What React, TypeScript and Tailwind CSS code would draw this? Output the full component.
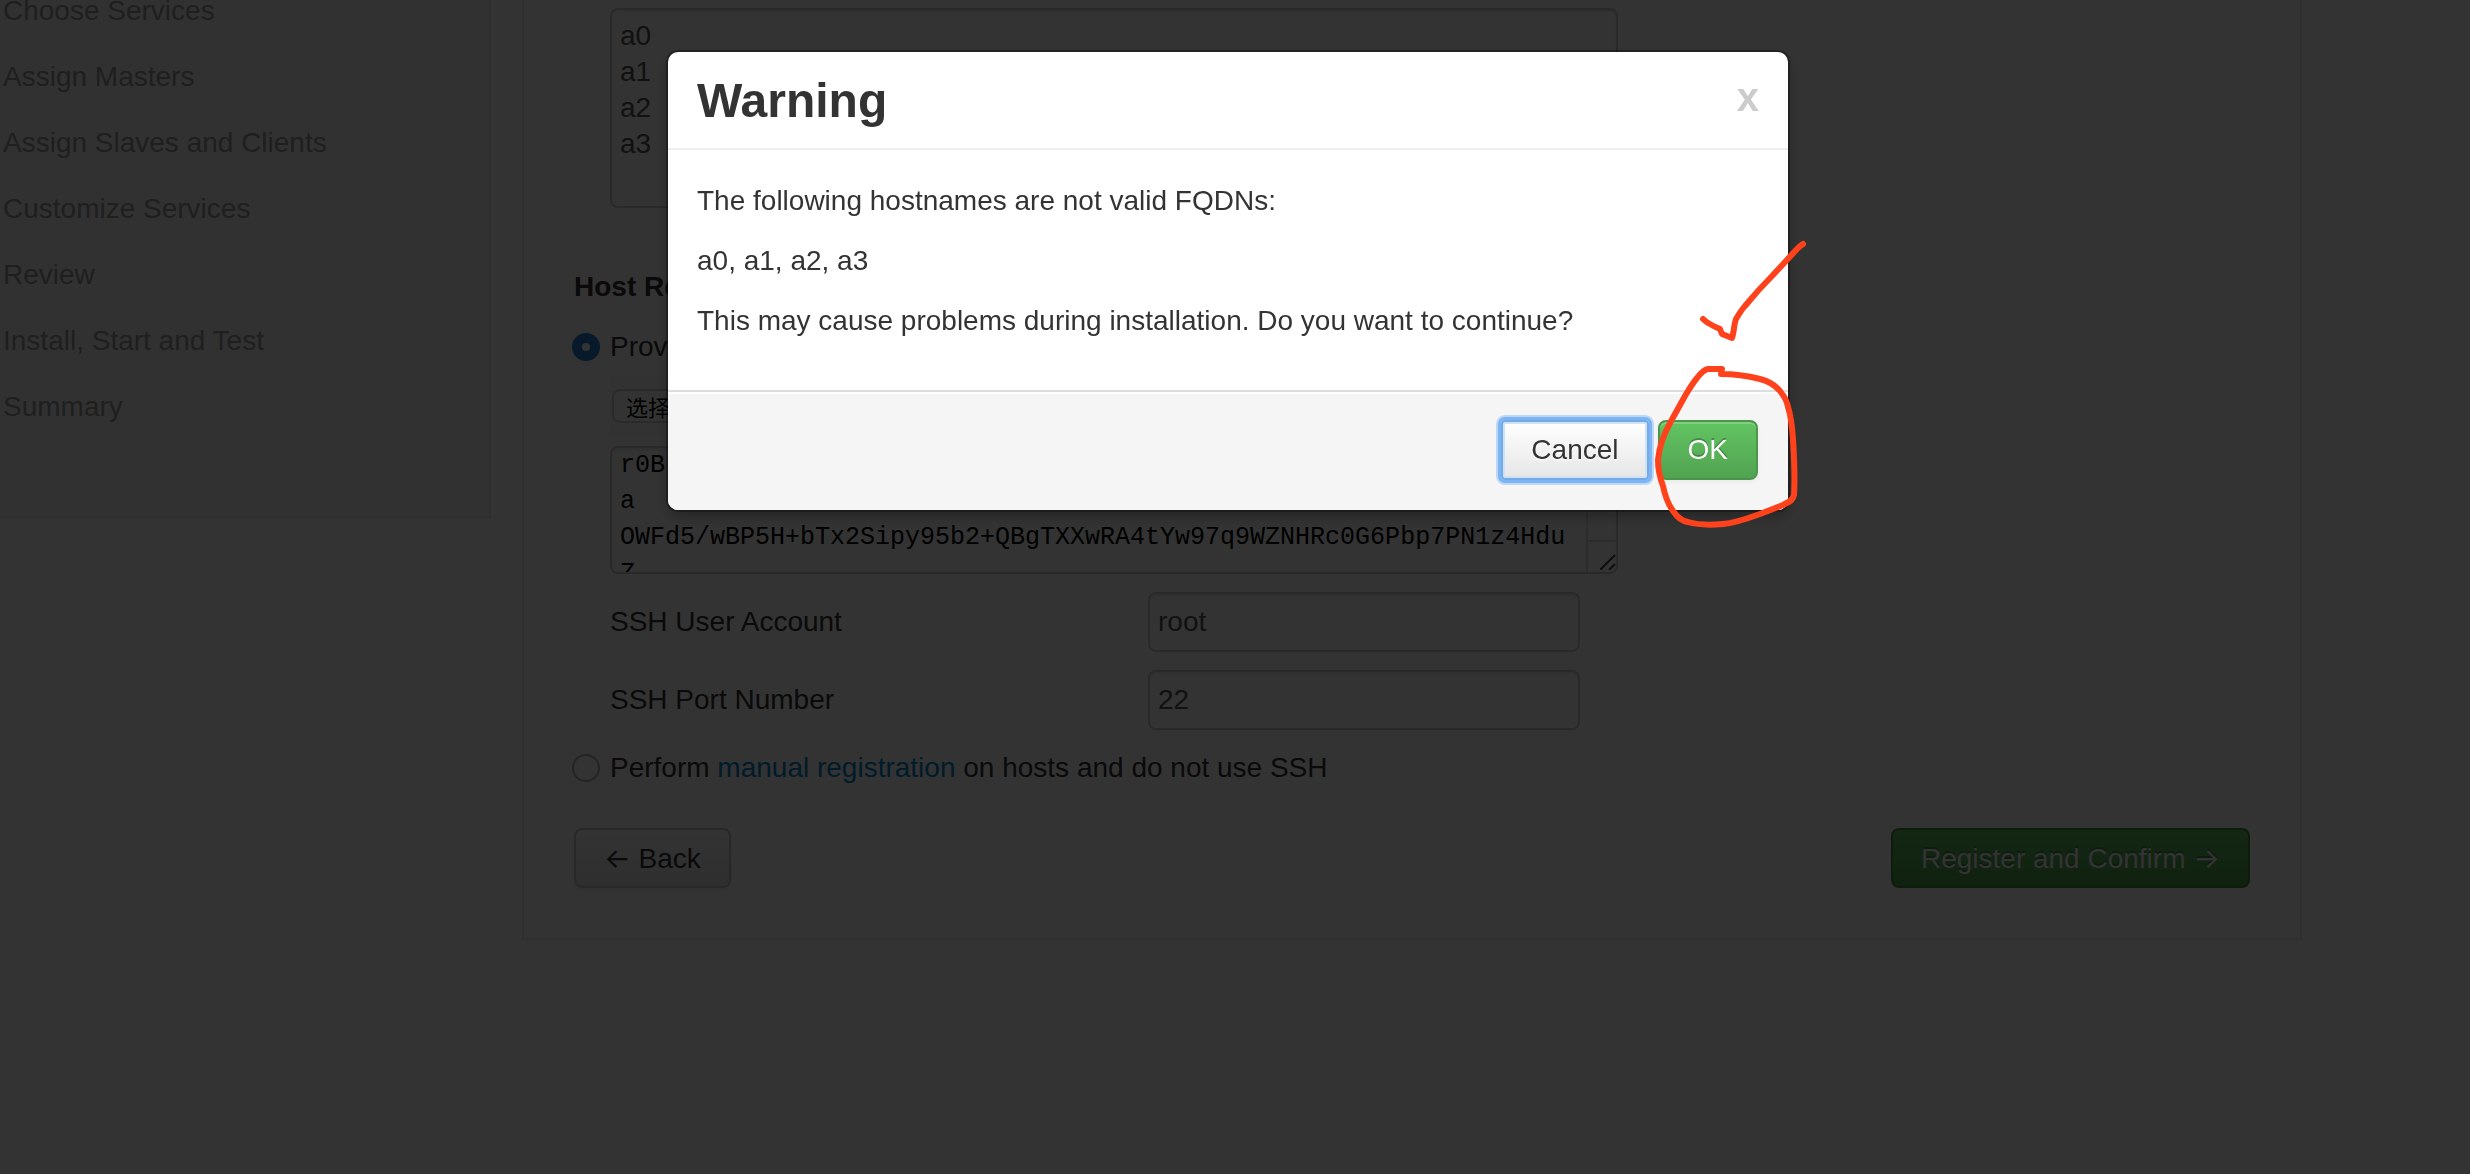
import type { ReactNode } from "react";

const steps = [
  "Choose Services",
  "Assign Masters",
  "Assign Slaves and Clients",
  "Customize Services",
  "Review",
  "Install, Start and Test",
  "Summary",
];

const hosts = ["a0", "a1", "a2", "a3"];

const sshKey = [
  "r0B",
  "a",
  "OWFd5/wBP5H+bTx2Sipy95b2+QBgTXXwRA4tYw97q9WZNHRc0G6Pbp7PN1z4Hdu",
  "Z",
].join("\n");

const fieldBox =
  "rounded-lg border-2 border-[#cccccc] bg-white px-2 text-[#555555] shadow-[inset_0_2px_2px_rgba(0,0,0,0.075)] outline-none";

function Sidebar() {
  return (
    <aside className="w-[491px] shrink-0 border-r-2 border-b-2 border-[#e3e3e3] bg-[#f5f5f5] pt-px pb-[99px] pl-[3px]">
      <ol className="flex flex-col gap-[46px] leading-5 text-[#999999]">
        {steps.map((s) => (
          <li key={s}>{s}</li>
        ))}
      </ol>
    </aside>
  );
}

function RadioRow({ id, checked, children }: { id: string; checked?: boolean; children: ReactNode }) {
  return (
    <div className="-ml-0.5 flex items-center gap-2.5">
      <input
        id={id}
        type="radio"
        name="registration"
        defaultChecked={checked}
        className="size-7 appearance-none rounded-full border-2 border-[#b5b5b5] bg-white checked:border-[10px] checked:border-[#2a7fdc]"
      />
      <label htmlFor={id}>{children}</label>
    </div>
  );
}

function Field({ id, label, value }: { id: string; label: string; value: string }) {
  return (
    <div className="mt-[18px] ml-9 flex items-center">
      <label htmlFor={id} className="w-[538px]">
        {label}
      </label>
      <input id={id} type="text" defaultValue={value} className={"h-[60px] w-[432px] " + fieldBox} />
    </div>
  );
}

function InstallOptions() {
  return (
    <main className="mr-[168px] flex-1 border-x-2 border-b-2 border-[#e8e8e8] px-[50px] pt-2 pb-[50px] leading-10 text-[#333333]">
      <textarea
        aria-label="Target hosts"
        defaultValue={hosts.join("\n")}
        className={"ml-9 block h-[200px] w-[1008px] resize-none overflow-hidden py-2 leading-9 " + fieldBox}
      />
      <h2 className="mt-[59px] mb-5 font-bold">Host Registration Information</h2>
      <RadioRow id="use-ssh" checked>
        Provide your SSH Private Key to automatically register hosts
      </RadioRow>

      <div className="mt-[9px] ml-9 flex h-[60px] w-[1008px] items-center bg-[#fafafa] pl-0.5 text-[22px] text-black">
        <label className="rounded-lg border-2 border-[#d0d0d0] bg-white px-3 font-['Noto_Sans_CJK_SC',sans-serif] leading-[30px]">
          选择文件
          <input type="file" className="sr-only" />
        </label>
      </div>

      <div className="relative mt-2.5 ml-9 w-[1008px]">
        <textarea
          aria-label="SSH private key"
          defaultValue={sshKey}
          className={
            "block h-32 w-full resize-none overflow-hidden whitespace-pre font-['Liberation_Mono',monospace] text-[25px] leading-9 " +
            fieldBox +
            " text-black"
          }
        />
        <div className="absolute inset-y-0.5 right-0.5 flex w-[30px] flex-col justify-end border-l-2 border-[#dddddd]">
          <div className="flex h-8 items-end justify-end border-t-2 border-[#dddddd]">
            <svg viewBox="0 0 16 16" className="mb-0.5 size-4" stroke="#444444" strokeWidth="2" fill="none">
              <path d="M0 16 15 1M9 16 15 10" />
            </svg>
          </div>
        </div>
      </div>

      <Field id="ssh-user" label="SSH User Account" value="root" />
      <Field id="ssh-port" label="SSH Port Number" value="22" />

      <div className="mt-[18px]">
        <RadioRow id="manual">
          Perform{" "}
          <a href="#manual" className="text-[#0088cc]">
            manual registration
          </a>{" "}
          on hosts and do not use SSH
        </RadioRow>
      </div>

      <div className="mt-10 flex justify-between">
        <button className="h-[60px] rounded-lg border-2 border-[#c5c5c5] bg-linear-to-b from-white to-[#e6e6e6] px-7 shadow-[0_2px_4px_rgba(0,0,0,0.05)]">
          <span className="font-['Inter',sans-serif]">←</span> Back
        </button>
        <button className="h-[60px] rounded-lg border-2 border-[#458a45] bg-linear-to-b from-[#62c462] to-[#51a351] px-7 text-white text-shadow-[0_-2px_0_rgba(0,0,0,0.25)]">
          Register and Confirm <span className="font-['Inter',sans-serif]">→</span>
        </button>
      </div>
    </main>
  );
}

function Markup() {
  return (
    <svg
      viewBox="1648 228 170 312"
      aria-hidden="true"
      className="pointer-events-none absolute top-[176px] -right-[30px] h-[312px] w-[170px]"
      fill="none"
      stroke="#ff421c"
      strokeWidth="6"
      strokeLinecap="round"
      strokeLinejoin="round"
    >
      <path d="M1703 319C1706 322 1713 326 1720 329L1722 334 1732 338C1734 332 1734 324 1736 319C1739 314 1742 309 1745 306C1754 295 1764 284 1773 275L1797 249Q1800 246 1803 244" />
      <path d="M1722 369H1708C1703 370 1700 374 1697 378C1692 384 1688 391 1685 396L1670 423C1664 434 1659 448 1658 460C1658 470 1660 478 1663 486C1665 496 1668 504 1673 511C1677 517 1682 521 1688 522C1698 525 1712 525 1723 524C1736 523 1749 518 1760 514L1783 505C1788 502 1793 501 1794 495C1795 480 1794 455 1793 439C1792 425 1791 416 1788 407C1787 400 1784 396 1780 391C1775 385 1768 381 1760 379C1748 376 1734 374 1721 374Z" />
    </svg>
  );
}

function WarningDialog() {
  return (
    <div
      role="dialog"
      aria-modal="true"
      aria-labelledby="warning-title"
      className="relative w-full max-w-[1120px] rounded-[10px] bg-white leading-10 text-[#333333] shadow-[0_0_0_2px_rgba(0,0,0,0.3),0_6px_14px_rgba(0,0,0,0.3)]"
    >
      <header className="flex items-start justify-between border-b-2 border-[#eeeeee] px-[29px] pt-[19px] pb-[17px]">
        <h1 id="warning-title" className="text-5xl leading-[60px] font-bold">
          Warning
        </h1>
        <button aria-label="Close" className="text-[40px] leading-[52px] font-bold text-[#cccccc]">
          x
        </button>
      </header>
      <div className="flex flex-col gap-5 px-[29px] pt-[31px] pb-[49px]">
        <p>The following hostnames are not valid FQDNs:</p>
        <p>{hosts.join(", ")}</p>
        <p>This may cause problems during installation. Do you want to continue?</p>
      </div>
      <footer className="flex justify-end gap-[9px] rounded-b-[10px] border-t-2 border-[#dddddd] bg-[#f5f5f5] px-[30px] pt-7 pb-[30px] shadow-[inset_0_2px_0_#ffffff]">
        <button className="h-[60px] rounded-sm border-2 border-[#74aae8] bg-linear-to-b from-white to-[#e6e6e6] px-7 shadow-[0_0_0_3px_#7db4f3,0_0_0_5px_#bdd8f7,inset_0_0_0_2px_#cfe2f8] outline-none text-shadow-[0_2px_2px_rgba(255,255,255,0.75)]">
          Cancel
        </button>
        <button className="h-[60px] rounded-lg border-2 border-[#4b964b] bg-linear-to-b from-[#62c462] to-[#51a351] px-7 text-white shadow-[inset_0_2px_0_rgba(255,255,255,0.2),0_2px_4px_rgba(0,0,0,0.05)] text-shadow-[0_-2px_0_rgba(0,0,0,0.25)]">
          OK
        </button>
      </footer>
      <Markup />
    </div>
  );
}

export default function App() {
  return (
    <div className="min-h-screen bg-white font-['Liberation_Sans',Arial,sans-serif] text-[28px]">
      <div className="flex items-start gap-[31px]">
        <Sidebar />
        <InstallOptions />
      </div>
      <div className="fixed inset-0 flex items-start justify-center bg-black/80 pt-[52px] pr-3.5">
        <WarningDialog />
      </div>
    </div>
  );
}
